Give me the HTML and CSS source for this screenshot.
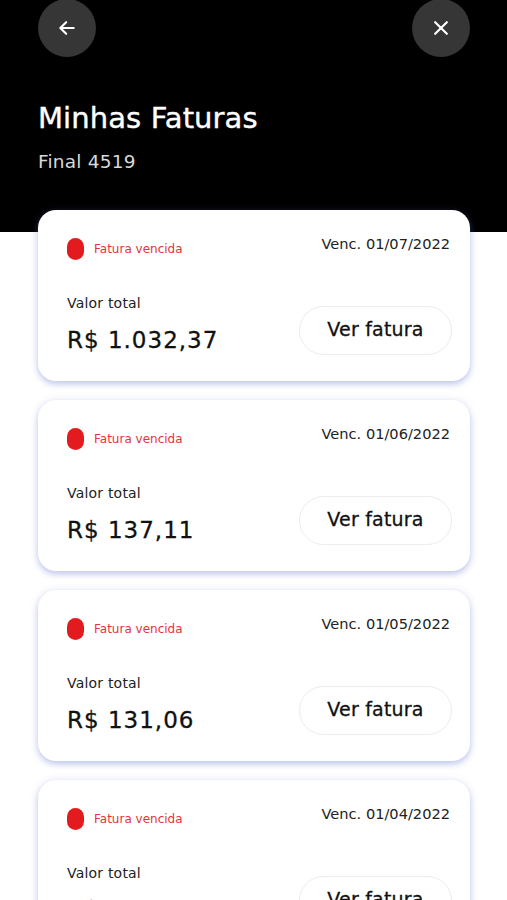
FILE: index.html
```html
<!DOCTYPE html>
<html lang="pt-BR">
<head>
    <meta charset="UTF-8">
    <meta name="viewport" content="width=device-width, initial-scale=1.0">
    <title>Minhas Faturas</title>
    <link rel="stylesheet" href="styles.css">
</head>
<body>
<div class="header">
    <div class="top-bar">
        <button class="round-btn" aria-label="Voltar">
            <svg width="20" height="20" viewBox="0 0 24 24" fill="none" stroke="#fff" stroke-width="2.6" stroke-linecap="round" stroke-linejoin="round">
                <path d="M20 12H5"/>
                <path d="M11 5l-7 7 7 7"/>
            </svg>
        </button>
        <button class="round-btn" aria-label="Fechar">
            <svg width="20" height="20" viewBox="0 0 24 24" fill="none" stroke="#fff" stroke-width="2.6" stroke-linecap="round">
                <path d="M5 5l14 14"/>
                <path d="M19 5L5 19"/>
            </svg>
        </button>
    </div>
    <h1 class="title">Minhas Faturas</h1>
    <div class="subtitle">Final 4519</div>
</div>

<div class="list">
    <div class="card">
        <div class="card-top">
            <div class="status"><span class="pill"></span>Fatura vencida</div>
            <div class="due">Venc. 01/07/2022</div>
        </div>
        <div class="card-bottom">
            <div>
                <div class="label">Valor total</div>
                <div class="amount">R$ 1.032,37</div>
            </div>
            <button class="btn">Ver fatura</button>
        </div>
    </div>
    <div class="card">
        <div class="card-top">
            <div class="status"><span class="pill"></span>Fatura vencida</div>
            <div class="due">Venc. 01/06/2022</div>
        </div>
        <div class="card-bottom">
            <div>
                <div class="label">Valor total</div>
                <div class="amount">R$ 137,11</div>
            </div>
            <button class="btn">Ver fatura</button>
        </div>
    </div>
    <div class="card">
        <div class="card-top">
            <div class="status"><span class="pill"></span>Fatura vencida</div>
            <div class="due">Venc. 01/05/2022</div>
        </div>
        <div class="card-bottom">
            <div>
                <div class="label">Valor total</div>
                <div class="amount">R$ 131,06</div>
            </div>
            <button class="btn">Ver fatura</button>
        </div>
    </div>
    <div class="card">
        <div class="card-top">
            <div class="status"><span class="pill"></span>Fatura vencida</div>
            <div class="due">Venc. 01/04/2022</div>
        </div>
        <div class="card-bottom">
            <div>
                <div class="label">Valor total</div>
                <div class="amount">R$ 98,40</div>
            </div>
            <button class="btn">Ver fatura</button>
        </div>
    </div>
</div>
</body>
</html>
```

FILE: styles.css
```css
* {
    box-sizing: border-box;
}

body {
    margin: 0;
    background: #fff;
    font-family: 'DejaVu Sans', 'Open Sans', sans-serif;
    color: #1a1a1a;
    overflow: hidden;
    height: 900px;
}

/* Cabeçalho */
.header {
    background: #000;
    height: 233px;
    padding: 0 37px 0 38px;
}

.top-bar {
    display: flex;
    justify-content: space-between;
    margin-top: -1px;
}

.round-btn {
    width: 58px;
    height: 58px;
    border-radius: 50%;
    border: none;
    background: #363636;
    display: flex;
    justify-content: center;
    align-items: center;
    padding: 0;
}

.title {
    margin: 44px 0 0;
    font-size: 29px;
    font-weight: normal;
    color: #fff;
    line-height: 34px;
    letter-spacing: 0.1px;
    -webkit-text-stroke: 0.4px #fff;
}

.subtitle {
    margin-top: 16px;
    font-size: 18.5px;
    color: #d8d8d8;
    line-height: 22px;
    letter-spacing: 0.2px;
}

/* Lista */
.list {
    margin-top: -22px;
    padding: 0 37px 0 38px;
    display: flex;
    flex-direction: column;
    gap: 19px;
}

.card {
    background: #fff;
    border-radius: 18px;
    padding: 25px 18px 26px 29px;
    box-shadow: 0 3px 6px rgba(90, 110, 200, 0.35), 0 0 10px rgba(120, 140, 220, 0.12);
}

.card-top {
    display: flex;
    justify-content: space-between;
    align-items: flex-start;
}

.status {
    display: flex;
    align-items: center;
    gap: 10px;
    margin-top: 3px;
    font-size: 12px;
    color: #e5343b;
}

.pill {
    width: 17px;
    height: 22px;
    border-radius: 9px;
    background: #e31b1f;
}

.due {
    font-size: 14.6px;
    line-height: 18px;
    color: #222;
    margin-right: 2px;
}

.card-bottom {
    display: flex;
    justify-content: space-between;
    align-items: flex-end;
    margin-top: 34px;
}

.label {
    font-size: 14px;
    line-height: 18px;
    color: #222;
    letter-spacing: 0.2px;
}

.amount {
    margin-top: 13px;
    font-size: 23px;
    line-height: 30px;
    color: #111;
    letter-spacing: 1px;
    -webkit-text-stroke: 0.3px #111;
}

.btn {
    width: 153px;
    height: 49px;
    border-radius: 25px;
    border: 1px solid #ececec;
    background: #fff;
    font-family: inherit;
    font-size: 19px;
    color: #111;
    padding: 0 0 4px;
    letter-spacing: 0.2px;
    -webkit-text-stroke: 0.3px #111;
}
```
